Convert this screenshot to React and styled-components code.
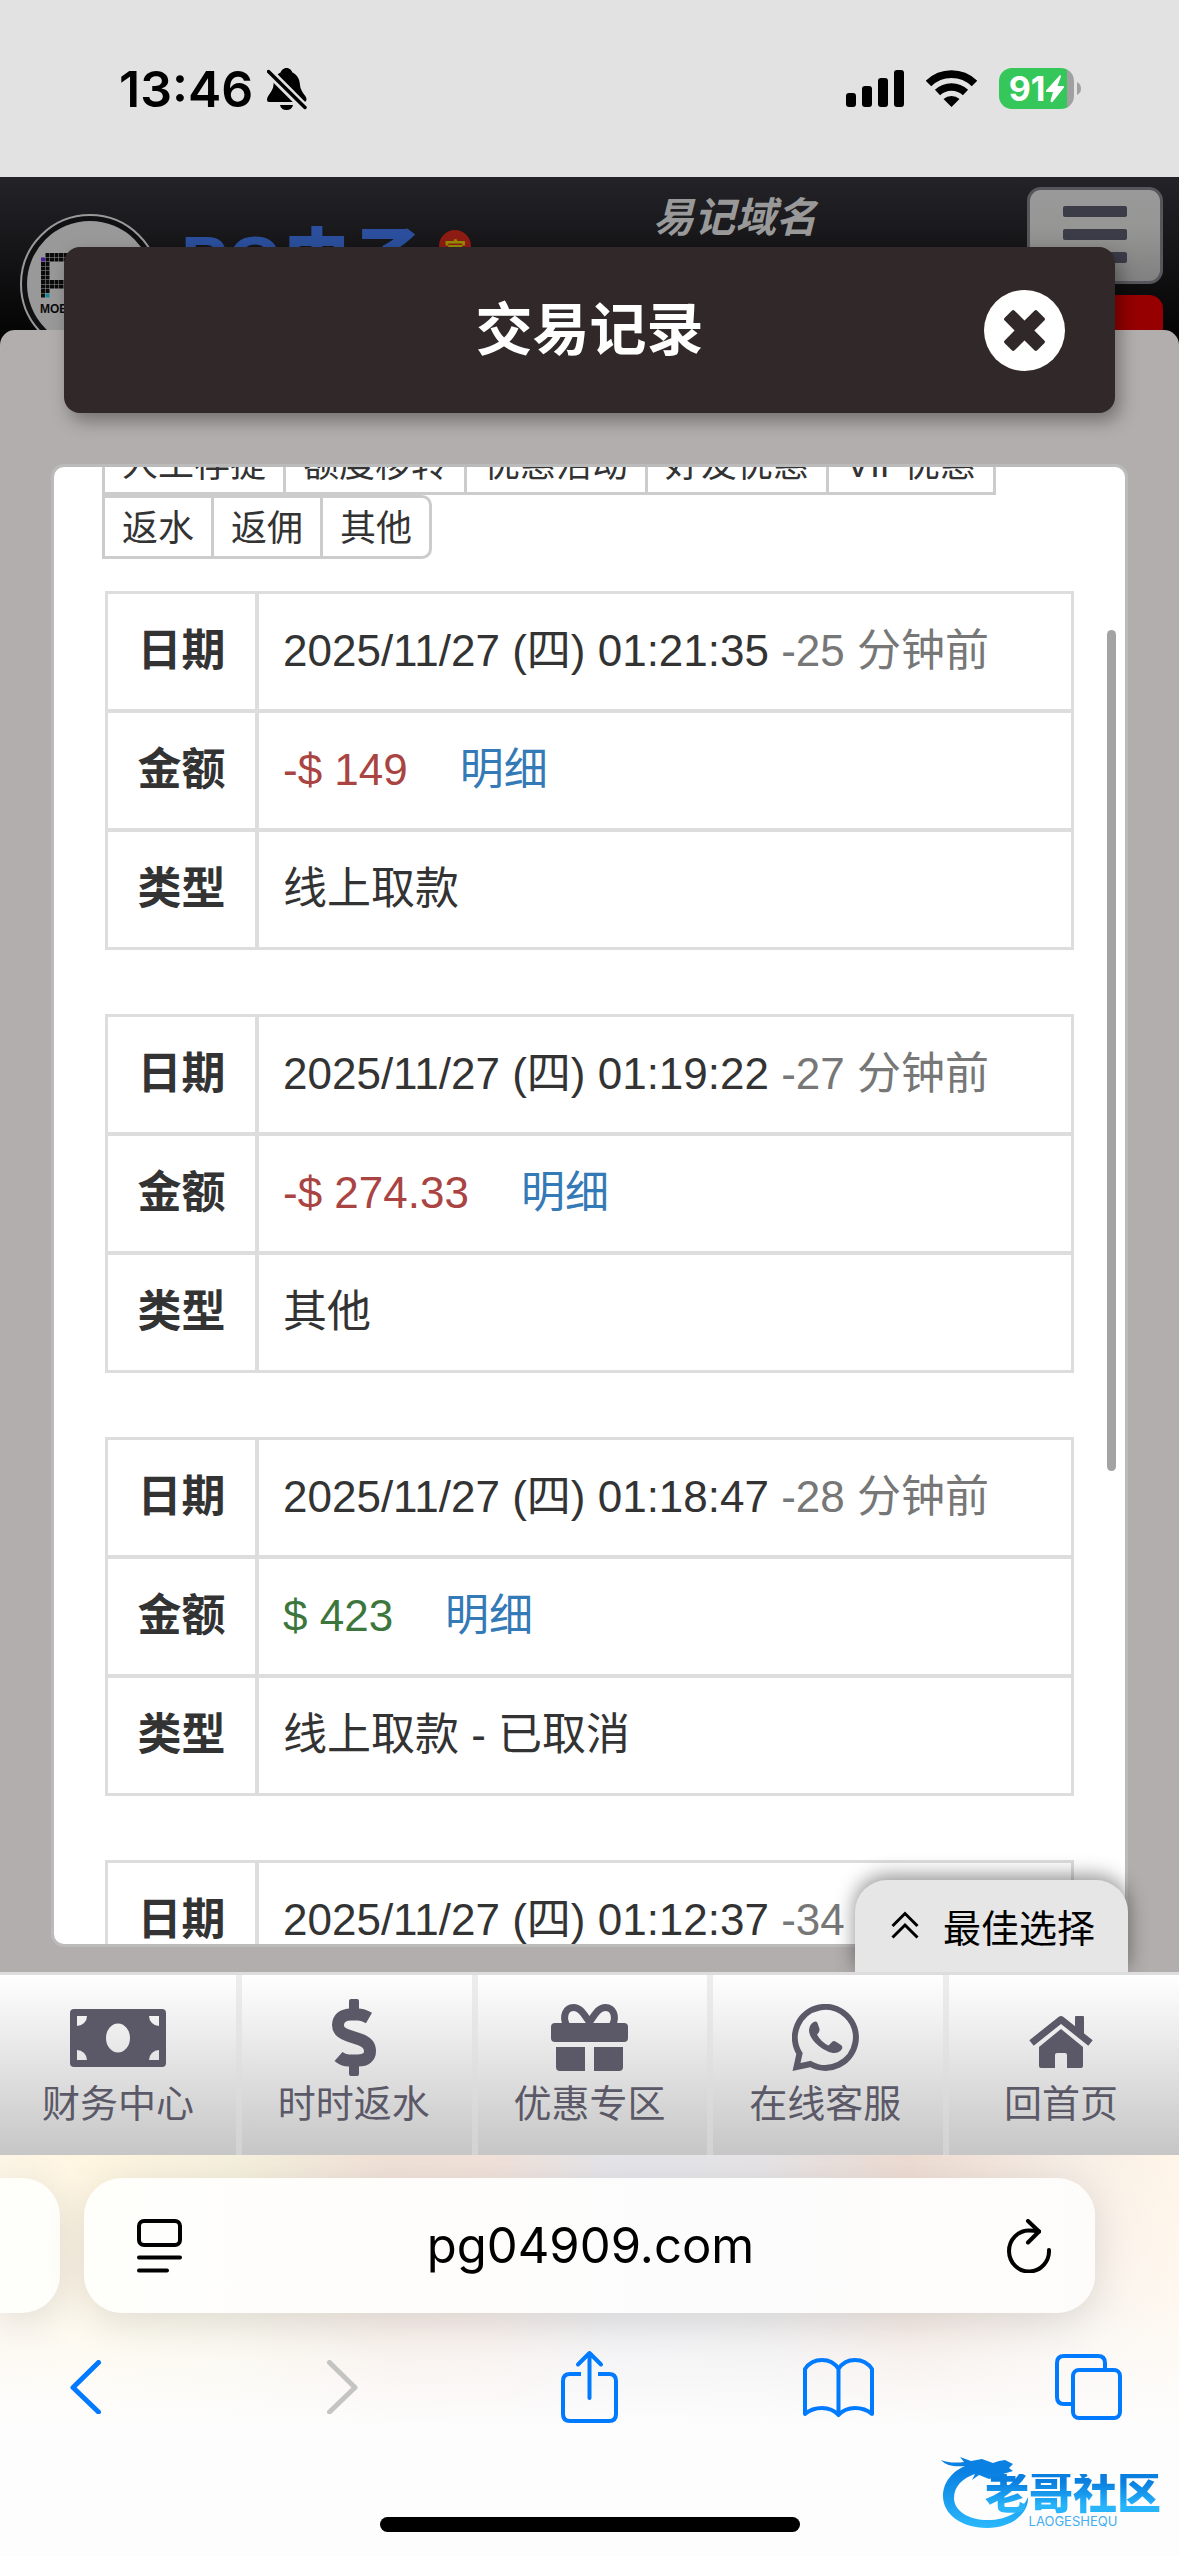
import React from 'react'
import styled, { createGlobalStyle } from 'styled-components'

const GlobalStyle = createGlobalStyle`
  * {
    box-sizing: border-box;
  }
  body {
    margin: 0;
    background: #fdfdfd;
    color: #333;
    font-family: "Liberation Sans", "Noto Sans CJK SC", sans-serif;
  }
  button, input {
    margin: 0;
    padding: 0;
    border: 0;
    background: none;
    color: inherit;
    font: inherit;
  }
  a {
    text-decoration: none;
  }
  svg {
    display: block;
    flex: none;
  }
`

const Screen = styled.div`
  display: flex;
  flex-direction: column;
  min-height: 100vh;
`

/* status bar */
const StatusBar = styled.div`
  display: flex;
  align-items: center;
  justify-content: space-between;
  height: 177px;
  padding: 0 98px 0 119px;
  background: #e2e2e2;
  color: #000;
  font-family: Inter, "Noto Sans CJK SC", sans-serif;
`

const StatusGroup = styled.div`
  display: flex;
  align-items: center;
  gap: ${props => props.gap}px;
`

const Time = styled.span`
  font-size: 50px;
  font-weight: 600;
  line-height: 60px;
`

const Battery = styled.div`
  display: flex;
  align-items: center;
  gap: 3px;
`

const BatteryLevel = styled.div`
  display: flex;
  align-items: center;
  justify-content: center;
  gap: 1px;
  width: 75px;
  height: 41px;
  border-radius: 13px;
  background: linear-gradient(to right, #35c759 68px, #a0a0a0 68px);
  color: #fff;
  font-size: 34px;
  font-weight: 700;
`

/* site behind the dialog */
const Stage = styled.div`
  position: relative;
  flex: 1;
  display: flex;
  flex-direction: column;
  background: #050505;
`

const SiteHeader = styled.header`
  display: flex;
  align-items: flex-start;
  height: 153px;
  padding: 10px 16px 0 20px;
  overflow: hidden;
  background: linear-gradient(#242328, #050505);
`

const SiteLogo = styled.div`
  display: flex;
  align-items: flex-start;
  padding-top: 27px;
`

const SiteName = styled.span`
  margin: 8px 17px 0 21px;
  color: #2b4f9c;
  font-size: 70px;
  font-weight: 900;
  line-height: 80px;
`

const Badge = styled.span`
  width: 32px;
  height: 60px;
  margin-top: 16px;
  padding-top: 6px;
  border-radius: 16px;
  background: #8d1c14;
  color: #958b00;
  font-size: 22px;
  font-weight: 700;
  line-height: 30px;
  text-align: center;
`

const Domain = styled.span`
  margin: 0 210px 0 auto;
  color: #999;
  font-size: 41px;
  font-style: italic;
  font-weight: 700;
  line-height: 62px;
`

const HeaderButtons = styled.div`
  display: flex;
  flex-direction: column;
  gap: 11px;
`

const MenuButton = styled.button`
  display: flex;
  flex-direction: column;
  align-items: center;
  gap: 12px;
  width: 136px;
  height: 97px;
  padding-top: 16px;
  border: 3px solid #56565c;
  border-radius: 14px;
  background: linear-gradient(#999, #969695 40%, #808080);
`

const MenuLine = styled.span`
  width: 64px;
  height: 11px;
  border-radius: 2px;
  background: #3c3c49;
`

const RedButton = styled.button`
  width: 136px;
  height: 60px;
  border-radius: 14px;
  background: #960000;
`

const SiteBody = styled.div`
  flex: 1;
  border-radius: 15px 15px 0 0;
  background: #b3aeae;
`

/* dialog */
const Dialog = styled.section`
  position: absolute;
  inset: 0;
  display: flex;
  flex-direction: column;
  gap: 51px;
  padding: 70px 51px 25px;
`

const DialogHeader = styled.div`
  display: grid;
  grid-template-columns: 1fr auto 1fr;
  align-items: center;
  height: 166px;
  margin: 0 13px;
  padding: 0 50px;
  border-radius: 16px;
  background: #312829;
  box-shadow: 5px 8px 18px rgba(0, 0, 0, 0.35);
`

const DialogTitle = styled.h1`
  grid-column: 2;
  margin: 0;
  color: #fff;
  font-size: 57px;
  font-weight: 700;
  line-height: 80px;
`

const CloseButton = styled.button`
  justify-self: end;
`

const Panel = styled.div`
  position: relative;
  flex: 1;
  min-height: 0;
  overflow: hidden;
  padding: 0 51px 0 48px;
  border: 3px solid #bbb;
  border-radius: 13px;
  background: #fff;
`

/* the list is scrolled down past the first rows of filters */
const ScrollContent = styled.div`
  margin-top: -36px;
`

const ScrollThumb = styled.div`
  position: absolute;
  top: 163px;
  right: 9px;
  width: 9px;
  height: 841px;
  border-radius: 5px;
  background: #a3a3a3;
`

const FilterRow = styled.div`
  display: flex;
`

const FilterButton = styled.button`
  height: 64px;
  padding: 4px 17px 0;
  border: 3px solid #ccc;
  background: #fff;
  font-size: 36px;
  line-height: 54px;

  & + & {
    margin-left: -3px;
  }
  &.last {
    border-radius: 0 10px 10px 0;
  }
`

const Records = styled.div`
  display: flex;
  flex-direction: column;
  gap: 64px;
  padding: 32px 0 0 3px;
`

const RecordTable = styled.table`
  width: 100%;
  border: 3px solid #ddd;
  border-spacing: 0;
  font-size: 44px;
  line-height: 60px;

  tr + tr > * {
    border-top: 4px solid #ddd;
  }
  tr + tr > th,
  tr + tr > td {
    height: 119px;
  }
`

const Label = styled.th`
  width: 151px;
  height: 115px;
  padding: 0 0 2px;
  border-right: 4px solid #ddd;
  font-weight: 700;
`

const Value = styled.td`
  height: 115px;
  padding: 0 24px 2px;
  white-space: nowrap;
`

const Ago = styled.span`
  color: #777;
`

const Amount = styled.span`
  margin-right: 52px;
  color: ${props => (props.$income ? '#3c763d' : '#a94442')};
`

const DetailLink = styled.a`
  color: #337ab7;
`

const BestChoice = styled.button`
  position: absolute;
  right: 51px;
  bottom: 0;
  display: flex;
  align-items: center;
  gap: 24px;
  height: 92px;
  padding: 0 33px 2px 36px;
  border-radius: 32px 32px 0 0;
  background: #e6e6e6;
  color: #000;
  font-size: 38px;
  box-shadow: 0 -4px 20px rgba(0, 0, 0, 0.45);
`

/* site bottom menu */
const BottomNav = styled.nav`
  position: relative;
  display: grid;
  grid-template-columns: repeat(5, 1fr);
  height: 183px;
  border-top: 3px solid #ddd;
  background: linear-gradient(#fff, #c6c6c7);
`

const NavItem = styled.a`
  display: flex;
  flex-direction: column;
  align-items: center;
  gap: 6px;
  padding-top: 24px;
  color: #5b5967;
  font-size: 38px;
  line-height: 44px;

  & + & {
    box-shadow: inset 6px 0 rgba(221, 221, 221, 0.53);
  }
`

const NavIcon = styled.span`
  display: flex;
  align-items: center;
  height: 77px;
`

/* browser */
const Browser = styled.div`
  position: relative;
  display: flex;
  flex-direction: column;
  align-items: stretch;
  height: 401px;
  overflow: hidden;
  background:
    linear-gradient(rgba(253, 253, 253, 0), rgba(253, 253, 253, 0.35) 35%, #fdfdfd 68%),
    linear-gradient(to right, #fdf5e6, #fff6e0 8%, #f6f1de 20%, #f1e1d7 33%, #f1e2da 42%, #e5e5ea 52%, #e6e4e6 65%, #eedcd2 77%, #f6ede5 90%, #fff5e8);
`

const AddressRow = styled.div`
  display: flex;
  gap: 24px;
  padding: 23px 84px 0 0;
`

const PreviousTab = styled.div`
  width: 60px;
  height: 135px;
  border-radius: 0 38px 38px 0;
  background: #fefefb;
  box-shadow: 0 8px 40px rgba(0, 0, 0, 0.12);
`

const AddressBar = styled.div`
  flex: 1;
  display: flex;
  align-items: center;
  min-width: 0;
  height: 135px;
  padding: 0 44px 0 53px;
  border-radius: 38px;
  background: linear-gradient(to right, #fefefb, #fefdfb 33%, #fcfcfc 55%, #fefcfb);
  box-shadow: 0 8px 40px rgba(0, 0, 0, 0.12);
  color: #000;
`

const AddressInput = styled.input`
  flex: 1;
  min-width: 0;
  height: 80px;
  padding-right: 8px;
  font-family: Inter, sans-serif;
  font-size: 49px;
  text-align: center;
  outline: none;
`

const Toolbar = styled.div`
  display: flex;
  align-items: center;
  justify-content: space-between;
  height: 148px;
  padding: 0 55px;
`

const ToolButton = styled.button`
  display: flex;
  justify-content: center;
  width: 72px;
  color: ${props => (props.disabled ? '#c4c4c3' : '#007aff')};
`

const HomeBar = styled.div`
  width: 420px;
  height: 15px;
  margin: auto auto 24px;
  border-radius: 8px;
  background: #000;
`

const Watermark = styled.div`
  position: absolute;
  right: 18px;
  bottom: 26px;
  display: flex;
  align-items: flex-end;
`

const WatermarkText = styled.div`
  display: flex;
  flex-direction: column;
  align-items: center;
  margin-left: -48px;
  padding-bottom: 2px;
`

const WatermarkName = styled.span`
  background: linear-gradient(#0a7fe0 20%, #27b4fb 80%);
  background-clip: text;
  color: transparent;
  font-size: 44px;
  font-weight: 900;
  line-height: 40px;
`

const WatermarkSub = styled.span`
  color: #45aef0;
  font-family: Inter, sans-serif;
  font-size: 13px;
  line-height: 14px;
`

const filterRows = [
  ['人工存提', '额度移转', '优惠活动', '好友优惠', 'VIP优惠'],
  ['返水', '返佣', '其他'],
]

const records = [
  { date: '2025/11/27 (四) 01:21:35', ago: '-25 分钟前', amount: '-$ 149', type: '线上取款' },
  { date: '2025/11/27 (四) 01:19:22', ago: '-27 分钟前', amount: '-$ 274.33', type: '其他' },
  { date: '2025/11/27 (四) 01:18:47', ago: '-28 分钟前', amount: '$ 423', income: true, type: '线上取款 - 已取消' },
  { date: '2025/11/27 (四) 01:12:37', ago: '-34 分钟前', amount: '-$ 200', type: '线上取款' },
]

function BellOffIcon() {
  return (
    <svg width="40" height="42" viewBox="0 0 40 42">
      <path d="M19.500 0C16 0 14.500 2.500 13.500 4.500C8.500 7 7 11 6.500 17C6 24 0 27 0 32Q0 34 2 34H37Q39.500 34 39.500 31C39 27 33.500 24 33 17C32.500 11 30.500 7 25.500 4.500C24.500 2.500 23 0 19.500 0ZM13 37H26Q25 42 19.500 42Q14 42 13 37Z" />
      <path d="M-2 0L42 44" stroke="#e2e2e2" strokeWidth="9" />
      <path d="M1.500 3.500L38 39.500" stroke="#000" strokeWidth="3.500" strokeLinecap="round" />
    </svg>
  )
}

function SignalIcon() {
  return (
    <svg width="58" height="37" viewBox="0 0 58 37">
      <rect x="0" y="23" width="10" height="14" rx="3" />
      <rect x="16" y="16" width="10" height="21" rx="3" />
      <rect x="32" y="8" width="10" height="29" rx="3" />
      <rect x="48" y="0" width="10" height="37" rx="3" />
    </svg>
  )
}

function WifiIcon() {
  return (
    <svg width="51" height="37" viewBox="0 0 51 37">
      <g fill="none" stroke="#000">
        <path d="M2.500 13.500A32.800 32.800 0 0 1 48.500 13.500" strokeWidth="7.800" />
        <path d="M11.500 22.500A20.300 20.300 0 0 1 39.500 22.500" strokeWidth="7.500" />
      </g>
      <path d="M25.500 37L17.500 29A12 12 0 0 1 33.500 29Z" />
    </svg>
  )
}

function LogoIcon() {
  const dots = []
  for (let row = 0; row < 10; row++) {
    for (let col = 0; col < 9; col++) {
      const inPost = col < 2 && !(row === 0 && col === 0)
      const inBar = col >= 2 && (row < 2 || row === 6 || row === 7)
      if (inPost || inBar) {
        let fill = '#0a0a0a'
        if (row === 1 && col === 0) fill = '#4a1a9a'
        if (row === 9 && col === 1) fill = '#1787a0'
        dots.push(<rect key={row + '-' + col} x={21 + col * 4.5} y={39 + row * 4.5} width="4" height="4" fill={fill} />)
      }
    }
  }
  return (
    <svg width="140" height="140" viewBox="0 0 140 140">
      <circle cx="70" cy="70" r="69" fill="#101012" stroke="#999" strokeWidth="2" />
      <circle cx="70" cy="70" r="63" fill="#999" />
      {dots}
      <text x="20" y="99" fill="#0a0a0a" fontFamily="Liberation Sans, sans-serif" fontWeight="700" fontSize="12">MOBILE</text>
    </svg>
  )
}

function CloseIcon() {
  return (
    <svg width="81" height="81" viewBox="0 0 81 81">
      <circle cx="40.500" cy="40.500" r="40.500" fill="#fff" />
      <g fill="#312829">
        <rect x="17.500" y="33.500" width="46" height="14" rx="2" transform="rotate(45 40.5 40.5)" />
        <rect x="17.500" y="33.500" width="46" height="14" rx="2" transform="rotate(-45 40.5 40.5)" />
      </g>
    </svg>
  )
}

function MoneyIcon() {
  return (
    <svg width="96" height="58" viewBox="0 0 96 58" fill="currentColor">
      <path
        fillRule="evenodd"
        d="M4 0H92Q96 0 96 4V54Q96 58 92 58H4Q0 58 0 54V4Q0 0 4 0ZM7 7V17A10 10 0 0 0 17 7ZM89 7H79A10 10 0 0 0 89 17ZM7 51H17A10 10 0 0 0 7 41ZM89 51V41A10 10 0 0 0 79 51ZM48 14.500A12 14.500 0 0 0 48 43.500A12 14.500 0 0 0 48 14.500Z"
      />
    </svg>
  )
}

function DollarIcon() {
  return (
    <svg width="44" height="77" viewBox="0 0 44 77">
      <g fill="currentColor">
        <rect x="17" y="0" width="10" height="14" rx="2" />
        <rect x="17" y="63" width="10" height="14" rx="2" />
      </g>
      <path
        d="M37 19Q31 15.500 26 15.500H19C10 15.500 6 20 6 26C6 32 10 34.500 16 36.500L28 40.500C35 43 38 47 38 52C38 58 34 61.500 26 61.500H17Q11 61.500 6.500 57.500"
        fill="none"
        stroke="currentColor"
        strokeWidth="12"
      />
    </svg>
  )
}

function GiftIcon() {
  return (
    <svg width="77" height="67" viewBox="0 0 77 67" fill="currentColor">
      <rect x="0" y="19" width="77" height="19" rx="4" />
      <path d="M5 43H34V67H9Q5 67 5 63Z" />
      <path d="M43 43H72V63Q72 67 68 67H43Z" />
      <path
        d="M15.500 21C11 12 15 3.500 22.500 3.500C30 3.500 33 11 38.500 18C44 11 47 3.500 54.500 3.500C62 3.500 66 12 61.500 21"
        fill="none"
        stroke="currentColor"
        strokeWidth="7"
      />
    </svg>
  )
}

function ServiceIcon() {
  return (
    <svg width="67" height="67" viewBox="0 0 67 67">
      <path d="M4.500 63L18.500 60A30.500 30.500 0 1 0 7.500 49.500Z" fill="none" stroke="currentColor" strokeWidth="6" />
      <path
        d="M21 18.500Q24 16.500 25.500 19L27.500 25Q28 28 25 30.500Q29 38 36.500 41.500L40 38Q41.500 36.500 43.500 37.500L49 41Q51 42.500 50 45Q47 49.500 41 49Q31 47 23 38.500Q17 32 17 26Q17.500 20.500 21 18.500Z"
        fill="currentColor"
      />
    </svg>
  )
}

function HomeIcon() {
  return (
    <svg width="66" height="60" viewBox="0 -8 66 60" fill="currentColor">
      <path d="M3.500 27L33 3.500L62.500 27" fill="none" stroke="currentColor" strokeWidth="7" strokeLinejoin="round" />
      <path d="M47 1Q47 0 48 0H55Q56 0 56 1V22L47 15Z" />
      <path d="M11 31L33 13L55 31V50Q55 52 53 52H39V39Q39 37 37 37H29Q27 37 27 39V52H13Q11 52 11 50Z" />
    </svg>
  )
}

function DragonIcon() {
  return (
    <svg width="92" height="76" viewBox="0 0 92 76">
      <defs>
        <linearGradient id="dragon" x1="0" y1="0" x2="0" y2="1">
          <stop offset="0.200" stopColor="#0a80e2" />
          <stop offset="1" stopColor="#2ab8fc" />
        </linearGradient>
      </defs>
      <path
        d="M0 6C8 9 15 9 23 8L19 3L30 7L41 5L52 9L58 7L64 6L72 10L68 14L72 17L62 20L68 23L58 22L48 25L38 21L31 26L34 20C22 24 13 32 13 44C13 58 30 67 50 66C68 65 82 56 87 43C88 60 70 74 46 74C20 74 2 60 2 42C2 28 12 17 24 12C14 13 5 12 0 6Z"
        fill="url(#dragon)"
      />
    </svg>
  )
}

const navItems = [
  { label: '财务中心', icon: <MoneyIcon /> },
  { label: '时时返水', icon: <DollarIcon /> },
  { label: '优惠专区', icon: <GiftIcon /> },
  { label: '在线客服', icon: <ServiceIcon /> },
  { label: '回首页', icon: <HomeIcon /> },
]

function Record({ record }) {
  return (
    <RecordTable>
      <tbody>
        <tr>
          <Label scope="row">日期</Label>
          <Value>{record.date} <Ago>{record.ago}</Ago></Value>
        </tr>
        <tr>
          <Label scope="row">金额</Label>
          <Value>
            <Amount $income={record.income}>{record.amount}</Amount>
            <DetailLink href="#detail">明细</DetailLink>
          </Value>
        </tr>
        <tr>
          <Label scope="row">类型</Label>
          <Value>{record.type}</Value>
        </tr>
      </tbody>
    </RecordTable>
  )
}

export default function App() {
  return (
    <Screen>
      <GlobalStyle />
      <StatusBar>
        <StatusGroup gap={14}>
          <Time>13:46</Time>
          <BellOffIcon />
        </StatusGroup>
        <StatusGroup gap={22}>
          <SignalIcon />
          <WifiIcon />
          <Battery>
            <BatteryLevel>
              <span>91</span>
              <svg width="18" height="28" viewBox="0 0 18 28" fill="#fff">
                <path d="M14 0L0 15.500Q-0.500 17 1 17H7L4.500 26Q5 28 6.500 27L18 12.500Q18.500 11 17 11H11.500L15 1.500Q15 0 14 0Z" />
              </svg>
            </BatteryLevel>
            <svg width="4" height="13" viewBox="0 0 4 13" fill="#a0a0a0">
              <path d="M0 0Q4 2 4 6.500Q4 11 0 13Z" />
            </svg>
          </Battery>
        </StatusGroup>
      </StatusBar>

      <Stage>
        <SiteHeader>
          <SiteLogo>
            <LogoIcon />
            <SiteName>PG电子</SiteName>
            <Badge>官</Badge>
          </SiteLogo>
          <Domain>易记域名</Domain>
          <HeaderButtons>
            <MenuButton aria-label="菜单">
              <MenuLine />
              <MenuLine />
              <MenuLine />
            </MenuButton>
            <RedButton aria-label="登出" />
          </HeaderButtons>
        </SiteHeader>
        <SiteBody />

        <Dialog aria-labelledby="dialog-title">
          <DialogHeader>
            <DialogTitle id="dialog-title">交易记录</DialogTitle>
            <CloseButton aria-label="关闭">
              <CloseIcon />
            </CloseButton>
          </DialogHeader>
          <Panel>
            <ScrollContent>
              {filterRows.map((row, index) => (
                <FilterRow key={index}>
                  {row.map(name => (
                    <FilterButton key={name} className={name === '其他' ? 'last' : ''}>{name}</FilterButton>
                  ))}
                </FilterRow>
              ))}
              <Records>
                {records.map(record => (
                  <Record key={record.date} record={record} />
                ))}
              </Records>
            </ScrollContent>
            <ScrollThumb />
          </Panel>
        </Dialog>

        <BestChoice>
          <svg width="28" height="28" viewBox="0 0 28 28" fill="none" stroke="#000" strokeWidth="3">
            <path d="M1.500 15L14 2.500L26.500 15M1.500 26.500L14 14L26.500 26.500" />
          </svg>
          最佳选择
        </BestChoice>
      </Stage>

      <BottomNav>
        {navItems.map(item => (
          <NavItem key={item.label} href="#">
            <NavIcon>{item.icon}</NavIcon>
            {item.label}
          </NavItem>
        ))}
      </BottomNav>

      <Browser>
        <AddressRow>
          <PreviousTab />
          <AddressBar>
            <svg width="45" height="54" viewBox="0 0 45 54" fill="none" stroke="#000" strokeWidth="4" strokeLinecap="round">
              <rect x="2" y="2" width="41" height="24" rx="5" />
              <path d="M2 38.500H43M2 51.500H30" />
            </svg>
            <AddressInput aria-label="网址" defaultValue="pg04909.com" />
            <svg width="44" height="54" viewBox="0 0 44 54" fill="none" stroke="#000" strokeWidth="4" strokeLinecap="round" strokeLinejoin="round">
              <path d="M42 31A20 20.500 0 1 1 22 11.500Q27 11.500 32 12.500" />
              <path d="M21 2L32 12.500L21 23.500" />
            </svg>
          </AddressBar>
        </AddressRow>
        <Toolbar>
          <ToolButton aria-label="后退">
            <svg width="43" height="54" viewBox="0 0 43 54" fill="none" stroke="currentColor" strokeWidth="5" strokeLinecap="round" strokeLinejoin="round">
              <path d="M28.500 2.500L3 27.500L28.500 52" />
            </svg>
          </ToolButton>
          <ToolButton aria-label="前进" disabled>
            <svg width="36" height="54" viewBox="0 0 36 54" fill="none" stroke="currentColor" strokeWidth="5" strokeLinecap="round" strokeLinejoin="round">
              <path d="M7.500 2.500L33 27.500L7.500 52" />
            </svg>
          </ToolButton>
          <ToolButton aria-label="分享">
            <svg width="57" height="74" viewBox="0 0 57 74" fill="none" stroke="currentColor" strokeWidth="4" strokeLinecap="round" strokeLinejoin="round">
              <path d="M28.500 48V3M17 14.500L28.500 3L40 14.500" />
              <path d="M20 24H9Q2 24 2 31V64Q2 71 9 71H48Q55 71 55 64V31Q55 24 48 24H37" strokeLinecap="butt" />
            </svg>
          </ToolButton>
          <ToolButton aria-label="书签">
            <svg width="71" height="60" viewBox="0 0 71 60" fill="none" stroke="currentColor" strokeWidth="4" strokeLinecap="round" strokeLinejoin="round">
              <path d="M2 12Q8 3 19 3Q30 3 35.500 12Q41 3 52 3Q63 3 69 12V57Q62 51 52 51Q42 51 35.500 58Q29 51 19 51Q9 51 2 57ZM35.500 12V58" />
            </svg>
          </ToolButton>
          <ToolButton aria-label="标签页">
            <svg width="67" height="66" viewBox="0 0 67 66" fill="none" stroke="currentColor" strokeWidth="4">
              <rect x="18" y="16" width="47" height="48" rx="6" />
              <path d="M16 50H9Q2 50 2 43V9Q2 2 9 2H43Q50 2 50 9V15" />
            </svg>
          </ToolButton>
        </Toolbar>
        <HomeBar />
        <Watermark>
          <DragonIcon />
          <WatermarkText>
            <WatermarkName>老哥社区</WatermarkName>
            <WatermarkSub>LAOGESHEQU</WatermarkSub>
          </WatermarkText>
        </Watermark>
      </Browser>
    </Screen>
  )
}
